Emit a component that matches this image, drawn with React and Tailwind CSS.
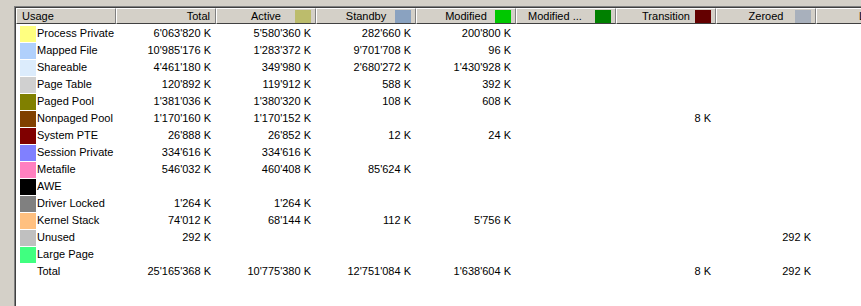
const headers = [
  { label: 'Usage', align: 'left' },
  { label: 'Total', align: 'right' },
  { label: 'Active', swatch: '#bcbc6c' },
  { label: 'Standby', swatch: '#8aa2c0' },
  { label: 'Modified', swatch: '#00c800' },
  { label: 'Modified ...', swatch: '#008000', align: 'trunc' },
  { label: 'Transition', swatch: '#640000' },
  { label: 'Zeroed', swatch: '#a8b0bc' },
  { label: 'Large Page', align: 'far' },
];

const rows = [
  ['Process Private', '#ffff80', "6'063'820 K", "5'580'360 K", "282'660 K", "200'800 K"],
  ['Mapped File', '#b0d0fc', "10'985'176 K", "1'283'372 K", "9'701'708 K", '96 K'],
  ['Shareable', '#dcecfc', "4'461'180 K", "349'980 K", "2'680'272 K", "1'430'928 K"],
  ['Page Table', '#d0d0d0', "120'892 K", "119'912 K", '588 K', '392 K'],
  ['Paged Pool', '#808000', "1'381'036 K", "1'380'320 K", '108 K', '608 K'],
  ['Nonpaged Pool', '#804000', "1'170'160 K", "1'170'152 K", '', '', '', '8 K'],
  ['System PTE', '#800000', "26'888 K", "26'852 K", '12 K', '24 K'],
  ['Session Private', '#8080ff', "334'616 K", "334'616 K"],
  ['Metafile', '#ff80c0', "546'032 K", "460'408 K", "85'624 K"],
  ['AWE', '#000000'],
  ['Driver Locked', '#808080', "1'264 K", "1'264 K"],
  ['Kernel Stack', '#ffc080', "74'012 K", "68'144 K", '112 K', "5'756 K"],
  ['Unused', '#c0c0c0', '292 K', '', '', '', '', '', '292 K'],
  ['Large Page', '#40ff80'],
  ['Total', null, "25'165'368 K", "10'775'380 K", "12'751'084 K", "1'638'604 K", '', '8 K', '292 K'],
];

function HeaderCell({ h }) {
  let justify = 'justify-center';
  if (h.align === 'left') justify = 'justify-start pl-[5px]';
  if (h.align === 'right') justify = 'justify-end pr-[5px]';
  if (h.align === 'trunc') justify = 'justify-start pl-[11px]';
  if (h.align === 'far') justify = 'justify-start pl-[42px]';
  return (
    <div className={`relative flex items-center shrink-0 w-[100px] h-[16px] border-t border-l border-t-white border-l-white border-r border-r-[#808080] border-b border-b-[#404040] ${justify}`}>
      <span className="whitespace-nowrap">{h.label}</span>
      {h.swatch && (
        <span className="absolute right-[4px] top-[1px] w-[16px] h-[13px]" style={{ backgroundColor: h.swatch }} />
      )}
    </div>
  );
}

export default function App() {
  return (
    <div className="w-[861px] h-[306px] overflow-hidden bg-[#d4d0c8] pl-[14px] pt-[6px] text-[11px] text-black" style={{ fontFamily: '"Liberation Sans", Arial, sans-serif' }}>
      <div className="w-[1000px] h-full border-l border-t border-[#808080]">
        <div className="h-full border-l border-t border-[#404040] bg-white">
          <div className="flex bg-[#d4d0c8]">
            {headers.map(h => <HeaderCell key={h.label} h={h} />)}
          </div>
          <div className="pt-px">
            {rows.map(([name, color, ...vals]) => (
              <div key={name + (color || '')} className="flex h-[17px] leading-[17px]">
                <div className="flex items-start w-[100px] shrink-0 pl-[4px]">
                  <span className="w-[16px] h-[16px] shrink-0 mt-px" style={{ backgroundColor: color || 'transparent' }} />
                  <span className="ml-[1px] whitespace-nowrap">{name}</span>
                </div>
                {Array.from({ length: 7 }).map((_, i) => (
                  <div key={i} className="w-[100px] shrink-0 text-right pr-[5px] whitespace-nowrap">{vals[i] || ''}</div>
                ))}
              </div>
            ))}
          </div>
        </div>
      </div>
    </div>
  );
}
